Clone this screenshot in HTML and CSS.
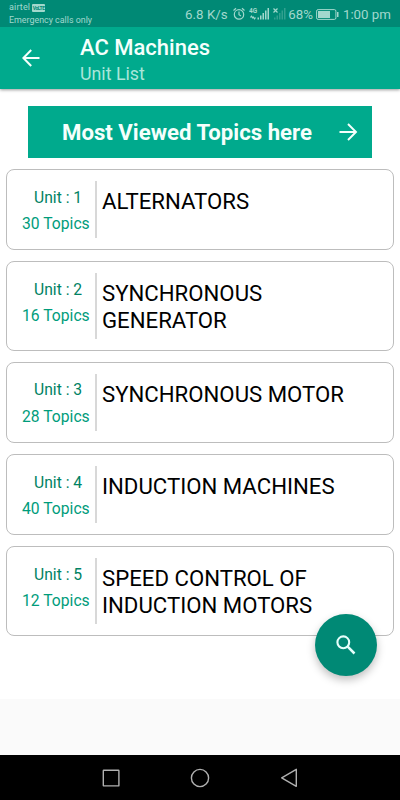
FILE: index.html
```html
<!DOCTYPE html>
<html lang="en">
<head>
  <meta charset="UTF-8" />
  <meta name="viewport" content="width=device-width, initial-scale=1.0"/>
  <title>AC Machines</title>
  <link rel="stylesheet" href="styles.css">
</head>
<body>
  <header class="header">
    <div class="status-bar">
      <div class="carrier">
        <div class="carrier-name">airtel <span class="volte">VoLTE</span></div>
        <div class="carrier-note">Emergency calls only</div>
      </div>
      <div class="status-right">
        <span class="speed">6.8 K/s</span>
        <svg class="alarm" width="12" height="14" viewBox="0 0 12 14" fill="none" stroke="currentColor" stroke-width="1.2">
          <circle cx="6" cy="7.4" r="4.7"/>
          <path d="M6 4.5v3.2l2 1.2M.5 3.5L3 1.3M11.5 3.5L9 1.3"/>
        </svg>
        <svg class="signal" width="21" height="14" viewBox="0 0 21 14">
          <text class="signal-label" x="0" y="6">4G</text>
          <path d="M1 10l2-2v1.5h2v1H1zM7 11l-2 2v-1.5H3v-1h4zM8.5 10.5h1.5v2H8.5zM11 8.5h1.5v4H11zM13.5 6H15v6.5h-1.5zM16 3.5h1.5v9H16zM18.5 1H20v11.5h-1.5z" fill="currentColor"/>
        </svg>
        <svg class="signal-off" width="13" height="14" viewBox="0 0 13 14">
          <path d="M.5 1.5l4 4M4.5 1.5l-4 4" stroke="currentColor" stroke-width="1.2"/>
          <path d="M1 10.5h1.5v2H1zM3.5 8.5H5v4H3.5zM6 6h1.5v6.5H6zM8.5 3.5H10v9H8.5zM11 1h1.5v11.5H11z" fill="currentColor" opacity=".3"/>
        </svg>
        <span class="percent">68%</span>
        <svg class="battery" width="23" height="11" viewBox="0 0 23 11">
          <rect x=".6" y=".6" width="19.3" height="9.8" rx="1.5" fill="none" stroke="currentColor"/>
          <path d="M2 2h12v7H2zM21 3h1.5v5H21z" fill="currentColor"/>
        </svg>
        <span class="clock">1:00 pm</span>
      </div>
    </div>
    <div class="toolbar">
      <svg class="back" width="18" height="18" viewBox="0 0 18 18" fill="none" stroke="currentColor" stroke-width="2">
        <path d="M17.5 9H2M9.2 1L1.4 9l7.8 8"/>
      </svg>
      <div class="titles">
        <h1 class="title">AC Machines</h1>
        <div class="subtitle">Unit List</div>
      </div>
    </div>
  </header>

  <main class="content">
    <button class="most-viewed">
      <span class="most-viewed-label">Most Viewed Topics here</span>
      <svg class="arrow" width="19" height="18" viewBox="0 0 19 18" fill="none" stroke="currentColor" stroke-width="1.9">
        <path d="M.5 9H17M9 1l8 8-8 8"/>
      </svg>
    </button>

    <div class="units">
      <div class="unit">
        <div class="unit-info">
          <div class="unit-number">Unit : 1</div>
          <div class="unit-topics">30 Topics</div>
        </div>
        <div class="unit-name">ALTERNATORS</div>
      </div>
      <div class="unit tall">
        <div class="unit-info">
          <div class="unit-number">Unit : 2</div>
          <div class="unit-topics">16 Topics</div>
        </div>
        <div class="unit-name">SYNCHRONOUS<br>GENERATOR</div>
      </div>
      <div class="unit">
        <div class="unit-info">
          <div class="unit-number">Unit : 3</div>
          <div class="unit-topics">28 Topics</div>
        </div>
        <div class="unit-name">SYNCHRONOUS MOTOR</div>
      </div>
      <div class="unit">
        <div class="unit-info">
          <div class="unit-number">Unit : 4</div>
          <div class="unit-topics">40 Topics</div>
        </div>
        <div class="unit-name">INDUCTION MACHINES</div>
      </div>
      <div class="unit tall">
        <div class="unit-info">
          <div class="unit-number">Unit : 5</div>
          <div class="unit-topics">12 Topics</div>
        </div>
        <div class="unit-name">SPEED CONTROL OF<br>INDUCTION MOTORS</div>
      </div>
    </div>

    <button class="fab" aria-label="Search">
      <svg width="20" height="20" viewBox="0 0 20 20" fill="none" stroke="currentColor">
        <circle cx="7.3" cy="7.3" r="5.9" stroke-width="2.1"/>
        <path d="M11.7 11.7l6.8 6.8" stroke-width="2.5"/>
      </svg>
    </button>
  </main>

  <div class="bottom-space"></div>

  <nav class="nav-bar">
    <svg width="18" height="20" viewBox="0 0 18 20"><rect x="1.3" y="2.3" width="15.6" height="15.6" rx=".5"/></svg>
    <svg width="20" height="20" viewBox="0 0 20 20"><circle cx="10" cy="10" r="8.6"/></svg>
    <svg width="18" height="20" viewBox="0 0 18 20"><path d="M16.3 1.3v17L1.7 9.8z" stroke-linejoin="round"/></svg>
  </nav>
</body>
</html>
```

FILE: styles.css
```css
:root {
  --primary: #00aa8d;
  --primary-dark: #008975;
  --status-text: #a2d8cd;
  --topics: #009c7b;
  --border: #bdbdbd;
}

* {
  margin: 0;
  padding: 0;
  box-sizing: border-box;
  font-family: Roboto, 'Liberation Sans', sans-serif;
}

body {
  background: #fff;
  width: 400px;
  height: 800px;
  display: flex;
  flex-direction: column;
  overflow: hidden;
}

button {
  border: none;
  cursor: pointer;
}

svg {
  display: block;
  flex-shrink: 0;
}

/* Header */
.header {
  height: 89px;
  flex-shrink: 0;
  background: var(--primary);
  color: #f5fffc;
  box-shadow: 0 1px 3px rgba(0, 0, 0, 0.4);
}

.status-bar {
  height: 27px;
  display: flex;
  justify-content: space-between;
  padding: 0 9px;
  background: var(--primary-dark);
  color: var(--status-text);
}

.carrier {
  padding-top: 1px;
  font-size: 9px;
  line-height: 13px;
  white-space: nowrap;
}

.carrier-name {
  display: flex;
  align-items: center;
  gap: 2px;
  letter-spacing: 0.15px;
}

.carrier-note {
  font-size: 8.9px;
}

.volte {
  width: 13px;
  height: 8px;
  border-radius: 1px;
  background: var(--status-text);
  color: var(--primary-dark);
  font-size: 5px;
  font-weight: 700;
  line-height: 8px;
  letter-spacing: -0.4px;
  text-align: center;
}

.status-right {
  display: flex;
  align-items: center;
  padding-top: 1px;
  font-size: 13.3px;
  white-space: nowrap;
}

.speed {
  letter-spacing: 0.05px;
}

.alarm {
  margin-left: 5px;
}

.signal {
  margin-left: 4px;
}

.signal-label {
  font-size: 6.5px;
  font-weight: 700;
  fill: currentColor;
}

.signal-off {
  margin-left: 3px;
}

.percent {
  margin-left: 2.5px;
}

.battery {
  margin-left: 3px;
}

.clock {
  margin-left: 4px;
}

.toolbar {
  height: 62px;
  display: flex;
  padding-left: 22px;
}

.back {
  margin-top: 22px;
}

.titles {
  margin-left: 40px;
  padding-top: 8px;
}

.title {
  font-size: 22px;
  font-weight: 500;
  line-height: 26px;
}

.subtitle {
  margin-top: 2px;
  font-size: 17.8px;
  line-height: 21px;
  color: #aae6da;
}

/* Units */
.content {
  height: 610px;
  flex-shrink: 0;
  padding: 17px 6px 0;
  position: relative;
}

.most-viewed {
  width: 344px;
  height: 52px;
  margin: 0 auto;
  padding: 0 14.5px 0 34px;
  display: flex;
  align-items: center;
  justify-content: space-between;
  background: var(--primary);
  color: #f5fffc;
}

.most-viewed-label {
  font-size: 22.2px;
  font-weight: 700;
  white-space: nowrap;
}

.units {
  margin-top: 11px;
  display: flex;
  flex-direction: column;
  gap: 11.2px;
}

.unit {
  height: 81px;
  display: flex;
  padding: 11px 8px 11px 9px;
  border: 1px solid var(--border);
  border-radius: 8px;
}

.unit.tall {
  height: 89.5px;
}

.unit-info {
  width: 81px;
  padding: 6.6px 0 0 6px;
  border-right: 2px solid #d8d8d8;
  font-size: 15.7px;
  line-height: 19px;
  white-space: nowrap;
}

.unit-number {
  padding-left: 12px;
  color: #008263;
}

.unit-topics {
  margin-top: 7.6px;
  color: var(--topics);
}

.unit-name {
  padding: 7px 0 0 5px;
  font-size: 22.2px;
  line-height: 26.4px;
  color: #000;
  white-space: nowrap;
}

.fab {
  position: absolute;
  right: 23.5px;
  bottom: 23px;
  width: 62px;
  height: 62px;
  display: flex;
  align-items: center;
  justify-content: center;
  border-radius: 50%;
  background: var(--primary-dark);
  color: #e5fffb;
  box-shadow: 0 4px 8px rgba(0, 0, 0, 0.25);
}

/* Bottom */
.bottom-space {
  height: 56px;
  flex-shrink: 0;
  background: #fafafa;
}

.nav-bar {
  flex: 1;
  display: flex;
  align-items: center;
  justify-content: space-between;
  padding: 0 102px;
  background: #000;
}

.nav-bar svg {
  fill: none;
  stroke: #b0b0b0;
  stroke-width: 1.4;
}
```
